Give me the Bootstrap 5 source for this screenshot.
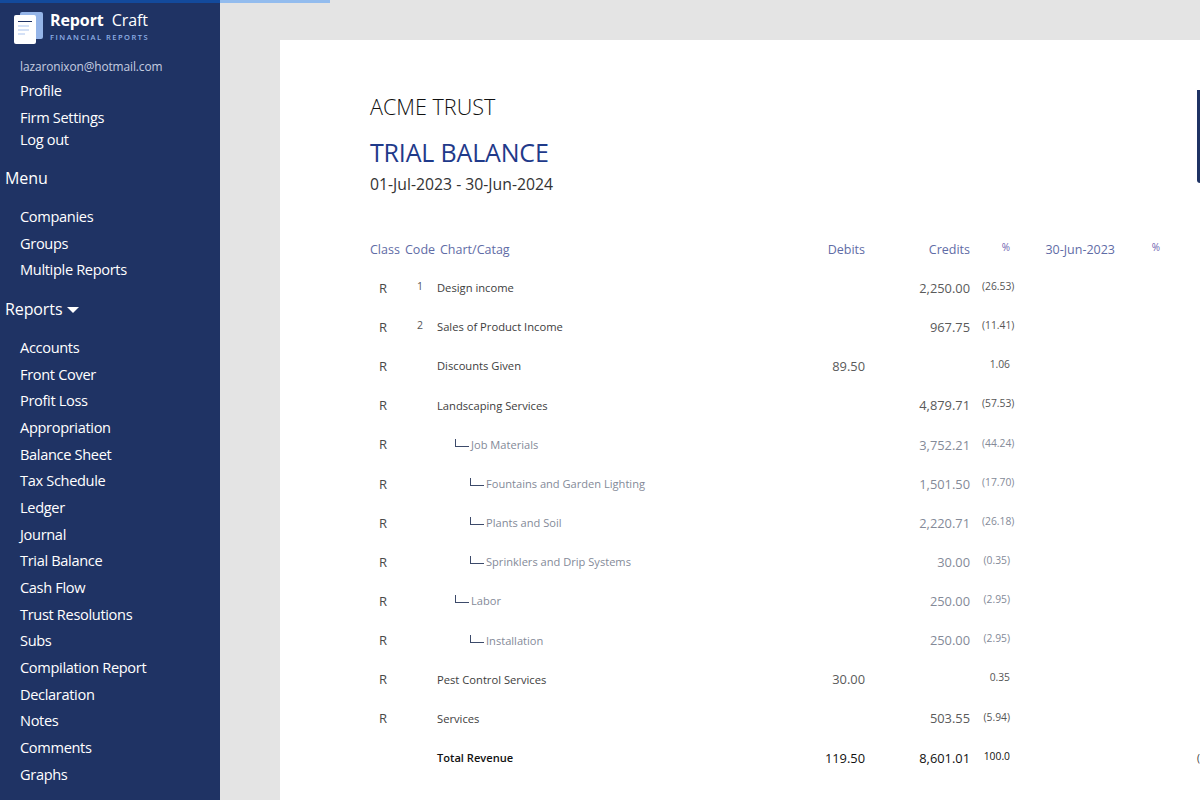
<!DOCTYPE html>
<html lang="en"><head><meta charset="utf-8"><title>Trial Balance</title>
<link rel="stylesheet" href="https://cdn.jsdelivr.net/npm/bootstrap@5.3.0/dist/css/bootstrap.min.css">
<style>
html,body{height:100%;overflow:hidden}
body{font-family:"Open Sans","Liberation Sans",sans-serif;background:#e4e4e4;color:#333}
.shell{height:800px;overflow:hidden}
.side{width:220px;flex:none;background:#1f3364;color:#fff;padding-top:3px;height:800px;overflow:hidden}
.loadbar{height:3px;position:fixed;top:0;left:0;width:330px;background:#93bcee;z-index:5}
.loadbar i{display:block;width:220px;height:3px;background:#134a9c}
.brandrow{height:47px;padding-left:14px;gap:5px}
.brandname{font-size:16px;line-height:20px;padding-top:7px;letter-spacing:-.1px}
.brandname b{font-weight:700}
.brandname span{margin-left:4px}
.brandsub{font-size:7.5px;letter-spacing:1.5px;color:#8fb0e6;font-weight:600;line-height:10px;margin-top:2px}
.mail{font-size:11.9px;letter-spacing:-.1px;color:#c5cde0;padding-left:20px;line-height:20px;margin:6px 0 1px}
.sidelink{display:block;color:#fff;text-decoration:none;font-size:14.6px;letter-spacing:-.34px;padding-left:20px;line-height:26.65px}
.sidehead{font-size:16px;letter-spacing:-.1px;padding-left:5px;line-height:26px;color:#fff}
.headmenu{margin:16px 0 12.3px}
.headreports{margin:13px 0 12.2px}
.caretmark{display:inline-block;border-left:6.5px solid transparent;border-right:6.5px solid transparent;border-top:6.5px solid #fff;vertical-align:2px;margin-left:0}
.content{flex:1;min-width:0;padding:40px 0 0 60px;height:800px;overflow:hidden}
.sheet{background:#fff;height:760px;padding:0 0 0 90px;position:relative;overflow:hidden;width:920px}
.firm{font-size:21.6px;font-weight:300;color:#111;line-height:28px;padding-top:53px;margin:0}
.rtitle{font-size:25px;font-weight:400;color:#1f3a8a;line-height:32px;margin:15px 0 0;letter-spacing:-.17px}
.period{font-size:15.75px;color:#333;line-height:22px;margin-top:5px}
.tbtable{table-layout:fixed;width:850px;margin-top:41px;border-collapse:collapse}
.tbtable th,.tbtable td{padding:0;font-weight:400;white-space:nowrap;vertical-align:middle}
.tbtable tr{height:39.15px}
.tbtable thead tr{height:33px}
.tbtable thead th{font-size:12.5px;color:#5f6ca6;vertical-align:top;padding-top:5px}
.tbtable th.pcth{font-size:10px;padding-top:4px;color:#6e63b0;text-align:right}
.cl{font-size:13px;color:#4a4a4a;padding-left:9px!important}
.cd{font-size:10.5px;color:#555;padding-left:12px!important;vertical-align:top!important;padding-top:10px!important}
.nm{font-size:11.2px;color:#3d3d3d}
.sub .nm,.sub .amt,.sub .pc{color:#848a98}
.sub .nm{font-size:11.1px}
.amt{font-size:12.85px;color:#5a5a5a;text-align:right}
.pc{font-size:10.3px;color:#555;text-align:right;vertical-align:top!important;padding:10px 0 0 12px!important}
.elbow{display:inline-block;width:14px;height:8px;border-left:1.3px solid #3c4a6a;border-bottom:1.3px solid #3c4a6a;margin-right:2px;vertical-align:2px}
.lv1{padding-left:18px!important}
.lv2{padding-left:33px!important}
.tot .nm{font-size:11.1px;font-weight:600;color:#111}
.tot .amt,.tot .pc{color:#111}
.pagetab{position:absolute;right:0;top:50px;width:3px;height:93px;background:#1f3364;border-bottom-left-radius:5px}
.clipped{font-size:10px;color:#333;padding-left:37px!important}
</style></head><body>
<div class="loadbar"><i></i></div>
<div class="shell d-flex">
<nav class="side">
 <div class="brandrow d-flex">
  <svg width="31" height="34" viewBox="0 0 31 34" class="mt-2 flex-shrink-0" aria-hidden="true">
   <rect x="6" y="1" width="23" height="27" rx="2" fill="#95b5e8"/>
   <rect x="0" y="4" width="22" height="29" rx="2" fill="#fff"/>
   <path d="M4 10.500h14" stroke="#1f3364" stroke-width="1"/>
   <path d="M4 15h11M4 19h11M4 23h7" stroke="#a9c3ee" stroke-width="1"/>
  </svg>
  <div><div class="brandname"><b>Report</b> <span>Craft</span></div><div class="brandsub">FINANCIAL REPORTS</div></div>
 </div>
 <div class="mail">lazaronixon@hotmail.com</div>
 <a class="sidelink" href="#">Profile</a>
 <a class="sidelink" href="#">Firm Settings</a>
 <a class="sidelink lh-sm" href="#">Log out</a>
 <div class="sidehead headmenu">Menu</div>
 <a class="sidelink" href="#">Companies</a>
 <a class="sidelink" href="#">Groups</a>
 <a class="sidelink" href="#">Multiple Reports</a>
 <div class="sidehead headreports">Reports <span class="caretmark"></span></div>
 <a class="sidelink" href="#">Accounts</a>
 <a class="sidelink" href="#">Front Cover</a>
 <a class="sidelink" href="#">Profit Loss</a>
 <a class="sidelink" href="#">Appropriation</a>
 <a class="sidelink" href="#">Balance Sheet</a>
 <a class="sidelink" href="#">Tax Schedule</a>
 <a class="sidelink" href="#">Ledger</a>
 <a class="sidelink" href="#">Journal</a>
 <a class="sidelink" href="#">Trial Balance</a>
 <a class="sidelink" href="#">Cash Flow</a>
 <a class="sidelink" href="#">Trust Resolutions</a>
 <a class="sidelink" href="#">Subs</a>
 <a class="sidelink" href="#">Compilation Report</a>
 <a class="sidelink" href="#">Declaration</a>
 <a class="sidelink" href="#">Notes</a>
 <a class="sidelink" href="#">Comments</a>
 <a class="sidelink" href="#">Graphs</a>
</nav>
<main class="content">
 <div class="sheet">
  <div class="pagetab"></div>
  <h1 class="firm">ACME TRUST</h1>
  <h2 class="rtitle">TRIAL BALANCE</h2>
  <div class="period">01-Jul-2023 - 30-Jun-2024</div>
  <table class="tbtable">
   <colgroup><col style="width:35px"><col style="width:32px"><col style="width:338px"><col style="width:90px"><col style="width:105px"><col style="width:40px"><col style="width:105px"><col style="width:45px"><col style="width:60px"></colgroup>
   <thead><tr><th>Class</th><th>Code</th><th><span class="d-inline-block" style="margin-left:3px">Chart/Catag</span></th><th class="text-end">Debits</th><th class="text-end">Credits</th><th class="pcth">%</th><th class="text-end">30-Jun-2023</th><th class="pcth">%</th><th></th></tr></thead>
   <tbody>
    <tr><td class="cl">R</td><td class="cd">1</td><td class="nm">Design income</td><td class="amt"></td><td class="amt">2,250.00</td><td class="pc">(26.53)</td><td></td><td></td><td></td></tr>
    <tr><td class="cl">R</td><td class="cd">2</td><td class="nm">Sales of Product Income</td><td class="amt"></td><td class="amt">967.75</td><td class="pc">(11.41)</td><td></td><td></td><td></td></tr>
    <tr><td class="cl">R</td><td class="cd"></td><td class="nm">Discounts Given</td><td class="amt">89.50</td><td class="amt"></td><td class="pc">1.06</td><td></td><td></td><td></td></tr>
    <tr><td class="cl">R</td><td class="cd"></td><td class="nm">Landscaping Services</td><td class="amt"></td><td class="amt">4,879.71</td><td class="pc">(57.53)</td><td></td><td></td><td></td></tr>
    <tr class="sub"><td class="cl">R</td><td class="cd"></td><td class="nm lv1"><span class="elbow"></span>Job Materials</td><td class="amt"></td><td class="amt">3,752.21</td><td class="pc">(44.24)</td><td></td><td></td><td></td></tr>
    <tr class="sub"><td class="cl">R</td><td class="cd"></td><td class="nm lv2"><span class="elbow"></span>Fountains and Garden Lighting</td><td class="amt"></td><td class="amt">1,501.50</td><td class="pc">(17.70)</td><td></td><td></td><td></td></tr>
    <tr class="sub"><td class="cl">R</td><td class="cd"></td><td class="nm lv2"><span class="elbow"></span>Plants and Soil</td><td class="amt"></td><td class="amt">2,220.71</td><td class="pc">(26.18)</td><td></td><td></td><td></td></tr>
    <tr class="sub"><td class="cl">R</td><td class="cd"></td><td class="nm lv2"><span class="elbow"></span>Sprinklers and Drip Systems</td><td class="amt"></td><td class="amt">30.00</td><td class="pc">(0.35)</td><td></td><td></td><td></td></tr>
    <tr class="sub"><td class="cl">R</td><td class="cd"></td><td class="nm lv1"><span class="elbow"></span>Labor</td><td class="amt"></td><td class="amt">250.00</td><td class="pc">(2.95)</td><td></td><td></td><td></td></tr>
    <tr class="sub"><td class="cl">R</td><td class="cd"></td><td class="nm lv2"><span class="elbow"></span>Installation</td><td class="amt"></td><td class="amt">250.00</td><td class="pc">(2.95)</td><td></td><td></td><td></td></tr>
    <tr><td class="cl">R</td><td class="cd"></td><td class="nm">Pest Control Services</td><td class="amt">30.00</td><td class="amt"></td><td class="pc">0.35</td><td></td><td></td><td></td></tr>
    <tr><td class="cl">R</td><td class="cd"></td><td class="nm">Services</td><td class="amt"></td><td class="amt">503.55</td><td class="pc">(5.94)</td><td></td><td></td><td></td></tr>
    <tr class="tot"><td class="cl"></td><td class="cd"></td><td class="nm">Total Revenue</td><td class="amt">119.50</td><td class="amt">8,601.01</td><td class="pc">100.0</td><td></td><td></td><td class="clipped">(0.00)</td></tr>
   </tbody>
  </table>
 </div>
</main>
</div>
<script src="https://cdn.jsdelivr.net/npm/bootstrap@5.3.0/dist/js/bootstrap.bundle.min.js"></script>
</body></html>
